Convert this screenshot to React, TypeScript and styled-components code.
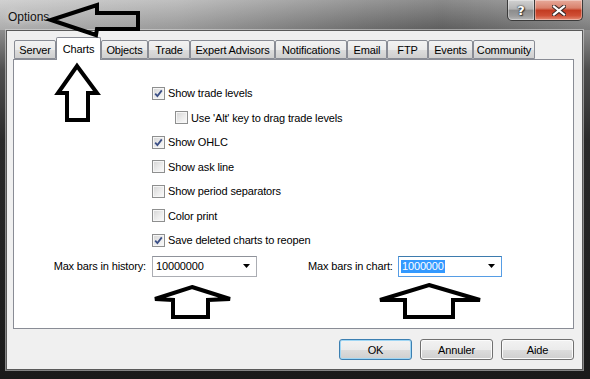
import React from "react";
import styled, { createGlobalStyle } from "styled-components";

const GlobalStyle = createGlobalStyle`
  html, body {
    margin: 0;
    padding: 0;
    background: #1a1a1a;
    overflow: hidden;
  }
  * {
    box-sizing: border-box;
  }
`;

const Window = styled.div`
  position: relative;
  width: 590px;
  height: 379px;
  display: flex;
  flex-direction: column;
  padding: 0 7px 9px 6px;
  font-family: "Liberation Sans", Arial, sans-serif;
  font-size: 11px;
  letter-spacing: -0.15px;
  color: #000;
  background:
    linear-gradient(to bottom, rgba(255, 255, 255, 0.22), rgba(0, 0, 0, 0.12)) 0 0 / 100% 30px no-repeat,
    linear-gradient(to right, #c4c4c4 0%, #adadad 30%, #7a7a7a 62%, #6a6a6a 75%, #8e8e8e 100%) 0 0 / 100% 30px no-repeat,
    linear-gradient(to bottom, #8e8e8e 30px, #4e4e4e 70px, #2a2a2a 140px, #1a1a1a 100%);
`;

const TitleBar = styled.div`
  height: 30px;
  display: flex;
  justify-content: space-between;
  align-items: flex-start;
  padding-left: 2px;
`;

const Title = styled.div`
  font-size: 12px;
  line-height: 14px;
  letter-spacing: 0;
  margin-top: 10px;
  color: #111;
  text-shadow: 0 0 6px rgba(255, 255, 255, 0.7);
`;

const CaptionGroup = styled.div`
  display: flex;
  height: 21px;
`;

const CaptionButton = styled.div<{ $close?: boolean }>`
  width: ${(p) => (p.$close ? 48 : 28)}px;
  height: 21px;
  display: flex;
  align-items: center;
  justify-content: center;
  border: 1px solid #3a3a3a;
  border-top: none;
  border-left: ${(p) => (p.$close ? "none" : "1px solid #3a3a3a")};
  border-radius: ${(p) => (p.$close ? "0 0 5px 0" : "0 0 0 5px")};
  box-shadow: inset 0 0 0 1px rgba(255, 255, 255, 0.35);
  background: ${(p) =>
    p.$close
      ? "linear-gradient(to bottom, #e7aa9b 0%, #d9816c 40%, #c33c22 52%, #cf4f35 78%, #e58d76 100%)"
      : "linear-gradient(to bottom, #d2d2d2 0%, #b4b4b4 45%, #8d8d8d 52%, #9c9c9c 80%, #b8b8b8 100%)"};
  color: #fff;
  font-family: "DejaVu Sans", sans-serif;
  font-weight: bold;
  font-size: 13px;
  text-shadow: 0 0 1px #222, 0 0 2px #333, 1px 1px 1px #444;
`;

const Client = styled.div`
  flex: 1;
  display: flex;
  flex-direction: column;
  background: #f0f0f0;
  border: 1px solid #5a5a5a;
  box-shadow: 0 0 0 1px rgba(220, 220, 220, 0.55);
  padding: 6px 8px 9px 6px;
`;

const TabStrip = styled.div`
  display: flex;
  align-items: flex-end;
  height: 22px;
  padding-left: 1px;
  position: relative;
  z-index: 1;
`;

const Tab = styled.div<{ $w: number; $active?: boolean }>`
  width: ${(p) => p.$w}px;
  height: ${(p) => (p.$active ? 23 : 19)}px;
  margin-bottom: ${(p) => (p.$active ? -1 : 0)}px;
  display: flex;
  align-items: center;
  justify-content: center;
  padding-top: ${(p) => (p.$active ? 0 : 1)}px;
  border: 1px solid #898c95;
  border-bottom: ${(p) => (p.$active ? "none" : "1px solid #898c95")};
  border-radius: 2px 2px 0 0;
  background: ${(p) =>
    p.$active
      ? "#fff"
      : "linear-gradient(to bottom, #f2f2f2 0%, #ebebeb 50%, #dddddd 51%, #cfcfcf 100%)"};
  white-space: nowrap;
`;

const Panel = styled.div`
  flex: 1;
  display: flex;
  flex-direction: column;
  background: #fff;
  border: 1px solid #898c95;
  padding-top: 21px;
`;

const CheckRow = styled.label<{ $indent?: boolean }>`
  height: 24.5px;
  display: flex;
  align-items: center;
  gap: 3px;
  padding-left: ${(p) => (p.$indent ? 161 : 138)}px;
  white-space: nowrap;
`;

const Box = styled.span`
  width: 13px;
  height: 13px;
  display: inline-flex;
  align-items: center;
  justify-content: center;
  border: 1px solid #8e8f8f;
  background: linear-gradient(135deg, #d4d4d4 0%, #ececec 55%, #fbfbfb 100%);
  box-shadow: inset 0 0 0 1px #f6f6f6;
`;

const FieldRow = styled.div`
  display: grid;
  grid-template-columns: 138px 105px 51px 90px 104px;
  align-items: center;
  height: 21px;
  margin-top: 3px;
`;

const FieldLabel = styled.span<{ $right?: boolean }>`
  text-align: ${(p) => (p.$right ? "right" : "left")};
  padding-right: ${(p) => (p.$right ? 6 : 0)}px;
  white-space: nowrap;
`;

const Combo = styled.div<{ $focused?: boolean }>`
  height: 21px;
  display: flex;
  align-items: center;
  justify-content: space-between;
  padding: 0 6px 0 2px;
  background: #fff;
  border: 1px solid ${(p) => (p.$focused ? "#569de5" : "#abadb3")};
  border-top-color: ${(p) => (p.$focused ? "#3d7bad" : "#8f929a")};
`;

const ComboText = styled.span<{ $selected?: boolean }>`
  padding: 0 1px;
  line-height: 13px;
  background: ${(p) => (p.$selected ? "#3399ff" : "transparent")};
  color: ${(p) => (p.$selected ? "#fff" : "#000")};
`;

const ButtonRow = styled.div`
  display: flex;
  justify-content: flex-end;
  gap: 8px;
  margin-top: 10px;
`;

const Button = styled.button<{ $primary?: boolean }>`
  width: 73px;
  height: 21px;
  font-family: "Liberation Sans", Arial, sans-serif;
  font-size: 11px;
  letter-spacing: -0.15px;
  color: #000;
  border: 1px solid ${(p) => (p.$primary ? "#3c7fb1" : "#707070")};
  border-radius: 3px;
  background: linear-gradient(to bottom, #f2f2f2 0%, #ebebeb 50%, #dddddd 51%, #cfcfcf 100%);
  box-shadow: inset 0 0 0 1px ${(p) => (p.$primary ? "#9fd6f4" : "#fbfbfb")};
  padding: 0;
`;

const Overlay = styled.svg`
  position: absolute;
  left: 0;
  top: 0;
  pointer-events: none;
  z-index: 5;
`;

const Check = () => (
  <svg width="9" height="9" viewBox="0 0 9 9">
    <path d="M1.2 4.6 L3.4 7 L7.8 1.4" fill="none" stroke="#3b4f86" strokeWidth="1.8" />
  </svg>
);

const Checkbox = ({ checked }: { checked?: boolean }) => <Box>{checked && <Check />}</Box>;

const Caret = () => (
  <svg width="7" height="4" viewBox="0 0 7 4">
    <path d="M0 0 H7 L3.5 4 Z" fill="#000" />
  </svg>
);

const CloseGlyph = () => (
  <svg width="14" height="11" viewBox="0 0 14 11">
    <path d="M2 1.5 L12 9.5 M12 1.5 L2 9.5" stroke="#3a2a28" strokeWidth="4.2" strokeLinecap="square" />
    <path d="M2 1.5 L12 9.5 M12 1.5 L2 9.5" stroke="#fff" strokeWidth="2.2" strokeLinecap="square" />
  </svg>
);

const tabs = [
  { label: "Server", w: 42 },
  { label: "Charts", w: 45, active: true },
  { label: "Objects", w: 47 },
  { label: "Trade", w: 42 },
  { label: "Expert Advisors", w: 85 },
  { label: "Notifications", w: 72 },
  { label: "Email", w: 40 },
  { label: "FTP", w: 41 },
  { label: "Events", w: 45 },
  { label: "Community", w: 62 },
];

const options = [
  { label: "Show trade levels", checked: true },
  { label: "Use 'Alt' key to drag trade levels", indent: true },
  { label: "Show OHLC", checked: true },
  { label: "Show ask line" },
  { label: "Show period separators" },
  { label: "Color print" },
  { label: "Save deleted charts to reopen", checked: true },
];

const App = () => {
  return (
    <>
      <GlobalStyle />
      <Window>
        <TitleBar>
          <Title>Options</Title>
          <CaptionGroup>
            <CaptionButton>?</CaptionButton>
            <CaptionButton $close>
              <CloseGlyph />
            </CaptionButton>
          </CaptionGroup>
        </TitleBar>
        <Client>
          <TabStrip>
            {tabs.map((t) => (
              <Tab key={t.label} $w={t.w} $active={t.active}>
                {t.label}
              </Tab>
            ))}
          </TabStrip>
          <Panel>
            {options.map((o) => (
              <CheckRow key={o.label} $indent={o.indent}>
                <Checkbox checked={o.checked} />
                {o.label}
              </CheckRow>
            ))}
            <FieldRow>
              <FieldLabel $right>Max bars in history:</FieldLabel>
              <Combo>
                <ComboText>10000000</ComboText>
                <Caret />
              </Combo>
              <span />
              <FieldLabel>Max bars in chart:</FieldLabel>
              <Combo $focused>
                <ComboText $selected>1000000</ComboText>
                <Caret />
              </Combo>
            </FieldRow>
          </Panel>
          <ButtonRow>
            <Button $primary>OK</Button>
            <Button>Annuler</Button>
            <Button>Aide</Button>
          </ButtonRow>
        </Client>
        {/* annotation arrows drawn over the dialog */}
        <Overlay width="590" height="379" viewBox="0 0 590 379">
          <g fill="none" stroke="#000" strokeWidth="4" strokeLinejoin="miter">
            <polygon points="51,20 97,5 97,13 138,13 138,29 97,29 96,35" />
            <polygon points="77,66 97,93 88,93 88,120 67,120 67,93 58,93" />
            <polygon points="192,287 230,299 208,300 208,317 173,317 173,300 155,299" />
            <polygon points="429,285 480,300 453,300 453,317 405,317 405,300 380,300" />
          </g>
        </Overlay>
      </Window>
    </>
  );
};

export default App;
